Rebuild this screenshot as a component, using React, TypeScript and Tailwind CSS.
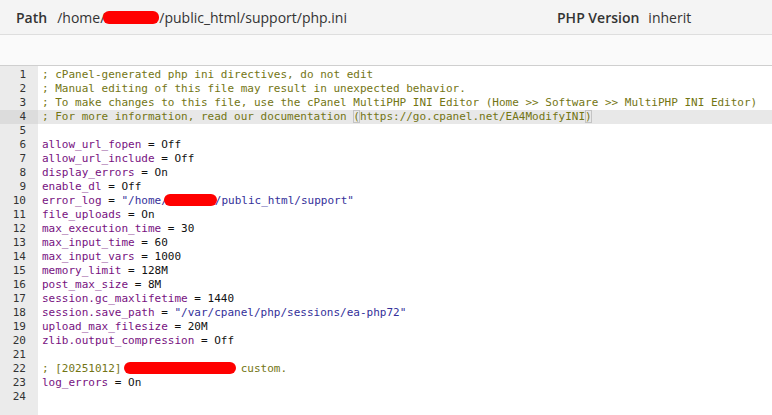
import * as React from 'react'

type Tok = { t: string; c?: 'cm' | 'key' | 'val' | 'str' | 'op' | 'red'; w?: number; br?: boolean }

const cm = (t: string): Tok[] => [{ t, c: 'cm' }]
const kv = (k: string, v: string): Tok[] => [
  { t: k, c: 'key' },
  { t: ' = ', c: 'op' },
  { t: v, c: 'val' },
]

const lines: Tok[][] = [
  cm('; cPanel-generated php ini directives, do not edit'),
  cm('; Manual editing of this file may result in unexpected behavior.'),
  cm('; To make changes to this file, use the cPanel MultiPHP INI Editor (Home >> Software >> MultiPHP INI Editor)'),
  [
    { t: '; For more information, read our documentation ', c: 'cm' },
    { t: '(', c: 'cm', br: true },
    { t: 'https://go.cpanel.net/EA4ModifyINI', c: 'cm' },
    { t: ')', c: 'cm', br: true },
  ],
  [],
  kv('allow_url_fopen', 'Off'),
  kv('allow_url_include', 'Off'),
  kv('display_errors', 'On'),
  kv('enable_dl', 'Off'),
  [
    { t: 'error_log', c: 'key' },
    { t: ' = ', c: 'op' },
    { t: '"/home/', c: 'str' },
    { t: '', c: 'red', w: 53 },
    { t: '/public_html/support"', c: 'str' },
  ],
  kv('file_uploads', 'On'),
  kv('max_execution_time', '30'),
  kv('max_input_time', '60'),
  kv('max_input_vars', '1000'),
  kv('memory_limit', '128M'),
  kv('post_max_size', '8M'),
  kv('session.gc_maxlifetime', '1440'),
  [
    { t: 'session.save_path', c: 'key' },
    { t: ' = ', c: 'op' },
    { t: '"/var/cpanel/php/sessions/ea-php72"', c: 'str' },
  ],
  kv('upload_max_filesize', '20M'),
  kv('zlib.output_compression', 'Off'),
  [],
  [
    { t: '; [20251012] ', c: 'cm' },
    { t: '', c: 'red', w: 112 },
    { t: ' custom.', c: 'cm' },
  ],
  kv('log_errors', 'On'),
  [],
]

const color: Record<string, string> = {
  cm: 'text-[#737514]',
  key: 'text-[#77117f]',
  val: 'text-[#111]',
  str: 'text-[#34309a]',
  op: 'text-[#111]',
}

function Token({ tok }: { tok: Tok }) {
  if (tok.c === 'red') {
    return (
      <span
        className="inline-block h-[12px] align-[-2px] rounded-[6px] bg-[#ff0000] -ml-[4px] -mr-[2px]"
        style={{ width: tok.w }}
      />
    )
  }
  return (
    <span className={`${color[tok.c ?? 'op']} ${tok.br ? 'outline outline-1 outline-[#c4c4c4] -outline-offset-1' : ''}`}>
      {tok.t}
    </span>
  )
}

export default function App() {
  return (
    <div className="w-[772px] h-[415px] overflow-hidden bg-white font-['Open_Sans',sans-serif]">
      {/* header */}
      <div className="h-[35px] bg-[#f4f4f4] border-b border-[#dedede] flex items-center text-[14px] text-[#333]">
        <div className="flex items-center pl-[16px] w-[557px]">
          <span className="font-semibold">Path</span>
          <span className="ml-[10px] flex items-center">
            /home/
            <span className="inline-block w-[56px] h-[13px] rounded-[6px] bg-[#ff0000] -ml-[2px]" />
            /public_html/support/php.ini
          </span>
        </div>
        <div className="flex items-center">
          <span className="font-semibold">PHP Version</span>
          <span className="ml-[9px]">inherit</span>
        </div>
      </div>
      {/* toolbar */}
      <div className="h-[31px] bg-[#fafafa] border-b border-[#cfcfcf]" />
      {/* editor */}
      <div className="flex h-[349px] font-['DejaVu_Sans_Mono',monospace] text-[11px] leading-[14px]">
        <div className="w-[38px] shrink-0 bg-[#ebebeb] pt-[2px] text-[#333] text-right">
          {lines.map((_, i) => (
            <div key={i} className={`h-[14px] pr-[12px] ${i === 3 ? 'bg-[#dcdcdc]' : ''}`}>
              {i + 1}
            </div>
          ))}
        </div>
        <div className="flex-1 pt-[2px] whitespace-pre">
          {lines.map((ln, i) => (
            <div key={i} className={`h-[14px] pl-[4px] ${i === 3 ? 'bg-[#e8e8e8]' : ''}`}>
              {ln.map((tok, j) => (
                <Token key={j} tok={tok} />
              ))}
            </div>
          ))}
        </div>
      </div>
    </div>
  )
}
